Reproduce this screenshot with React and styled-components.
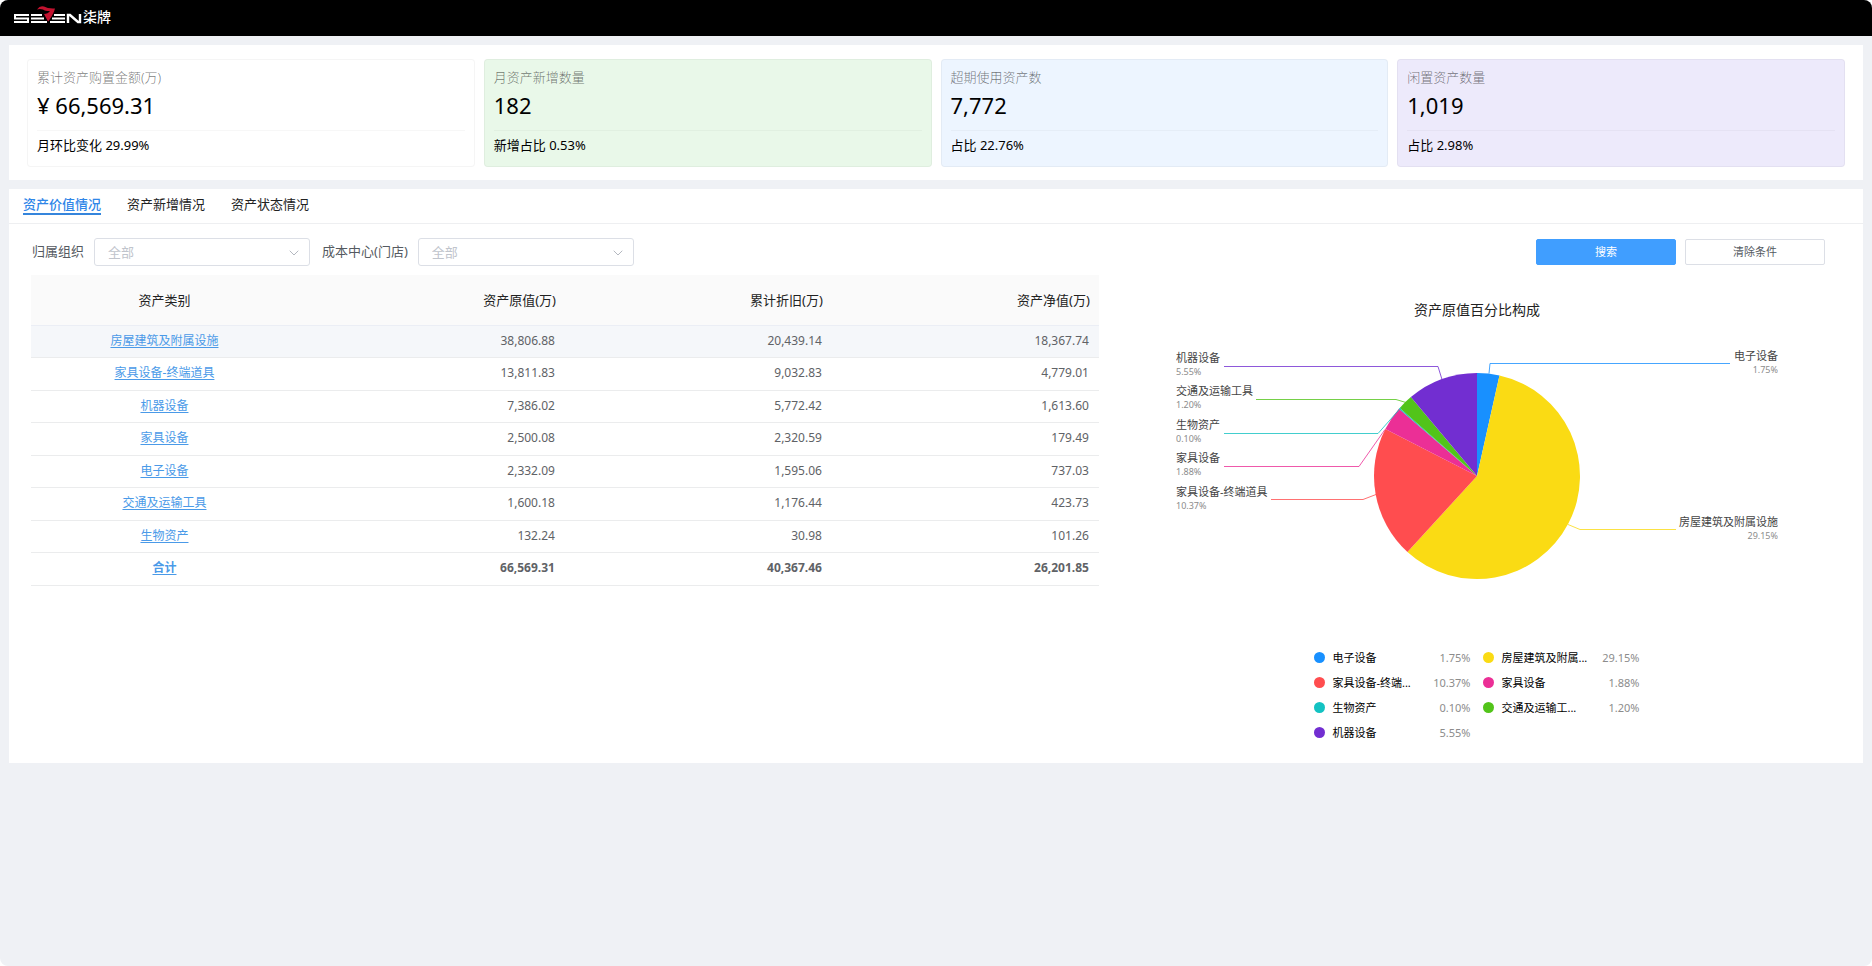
import React from "react";
import styled, { createGlobalStyle } from "styled-components";
import { ChevronDown } from "lucide-react";

const GlobalStyle = createGlobalStyle`
  *, *::before, *::after { box-sizing: border-box; }
  html { background: #fff; }
  body {
    margin: 0;
    font-family: "Noto Sans", "Noto Sans CJK SC", sans-serif;
    font-size: 13px;
    color: #000;
  }
  button, select { font-family: inherit; }
`;

const Page = styled.div`
  min-height: 100vh;
  background: #eff1f5;
  border-radius: 8px;
  overflow: hidden;
`;

const Header = styled.header`
  height: 36px;
  padding: 0 14px;
  background: #000;
  display: flex;
  align-items: flex-start;
`;

const Main = styled.main`
  padding: 9px;
  display: grid;
  gap: 9px;
`;

const Panel = styled.section`
  background: #fff;
`;

const Cards = styled(Panel)`
  display: grid;
  grid-template-columns: repeat(4, 1fr);
  gap: 9px;
  padding: 14px 18px 13px;
`;

const Card = styled.article`
  height: 108px;
  padding: 7px 9px;
  border: 1px solid rgba(0, 0, 0, 0.04);
  border-radius: 4px;
  background: ${(p) => p.$tone};
`;

const CardTitle = styled.h2`
  margin: 0;
  font-size: 13px;
  font-weight: 300;
  line-height: 20px;
  color: rgba(0, 0, 0, 0.55);
`;

const CardValue = styled.div`
  height: 44px;
  font-size: 22px;
  line-height: 36px;
  border-bottom: 1px solid rgba(0, 0, 0, 0.03);
`;

const CardNote = styled.div`
  padding-top: 4px;
  line-height: 20px;
`;

const Tabs = styled.nav`
  display: flex;
  gap: 26px;
  height: 35px;
  padding: 6px 14px 0;
  border-bottom: 1px solid #eeeff1;
`;

const Tab = styled.button`
  height: 20px;
  padding: 0;
  border: 0;
  border-bottom: 2px solid ${(p) => (p.$active ? "#3585dc" : "transparent")};
  background: none;
  font-size: 13px;
  line-height: 18px;
  font-weight: ${(p) => (p.$active ? 500 : 400)};
  color: ${(p) => (p.$active ? "#2f86e8" : "#222")};
`;

const Filters = styled.form`
  display: flex;
  align-items: center;
  justify-content: space-between;
  height: 28px;
  margin: 14px 38px 9px 23px;
`;

const FieldGroup = styled.div`
  display: flex;
  gap: 12px;
`;

const Field = styled.label`
  display: flex;
  align-items: center;
  gap: 10px;
  color: #555a61;
`;

const FieldName = styled.span`
  line-height: 18px;
  padding-bottom: 2px;
`;

const SelectBox = styled.span`
  position: relative;
  display: block;

  svg {
    position: absolute;
    right: 8px;
    top: 7px;
    pointer-events: none;
    color: #b4b8c0;
  }
`;

const Select = styled.select`
  display: block;
  width: 216px;
  height: 28px;
  padding: 0 30px 0 13px;
  border: 1px solid #dcdfe6;
  border-radius: 3px;
  background: #fff;
  appearance: none;
  font-size: 13px;
  color: #c0c4cc;
`;

const Actions = styled.div`
  display: flex;
  gap: 9px;
`;

const Button = styled.button`
  width: 140px;
  height: 26px;
  padding: 0;
  border: 1px solid ${(p) => (p.$primary ? "#409eff" : "#dcdfe6")};
  border-radius: 2px;
  background: ${(p) => (p.$primary ? "#409eff" : "#fff")};
  color: ${(p) => (p.$primary ? "#fff" : "#555a61")};
  font-size: 11px;
  line-height: 16px;
`;

const Content = styled.div`
  display: grid;
  grid-template-columns: 59fr 41fr;
  align-items: start;
  padding: 0 22px 21px;
`;

const Table = styled.table`
  width: 100%;
  border-collapse: separate;
  border-spacing: 0;
  table-layout: fixed;
`;

const HeadCell = styled.th`
  height: 51px;
  padding: 0 9px 2px;
  border-bottom: 1px solid #ebeef5;
  background: #fafafa;
  font-size: 13px;
  font-weight: 400;
  text-align: ${(p) => (p.$first ? "center" : "right")};
  color: #222;
`;

const Row = styled.tr`
  height: 32px;
  font-weight: ${(p) => (p.$total ? 700 : 400)};
  background: ${(p) => (p.$hover ? "#f5f7fa" : "#fff")};

  &:nth-child(even) { height: 33px; }
`;

const Cell = styled.td`
  padding: 0 10px 2px;
  border-bottom: 1px solid #ebeced;
  font-size: 12px;
  line-height: 20px;
  text-align: ${(p) => (p.$first ? "center" : "right")};
  color: #606266;
`;

const CellLink = styled.a`
  color: #4a9ae8;
  text-decoration: underline;
  text-underline-offset: 2px;
`;

const ChartSection = styled.section`
  display: flex;
  flex-direction: column;
  align-items: center;
  padding: 25px 0 0 14px;
`;

const ChartTitle = styled.h2`
  margin: 0;
  font-size: 14px;
  font-weight: 400;
  line-height: 20px;
  color: #222;
`;

const PieSvg = styled.svg`
  display: block;
  margin-top: 20px;

  .name { font-size: 11px; fill: #444; }
  .pct { font-size: 9px; fill: #8c8c8c; }
`;

const Legend = styled.ul`
  display: grid;
  grid-template-columns: 156px 156px;
  gap: 5px 13px;
  margin: 0;
  padding: 47px 0 0;
  list-style: none;
`;

const LegendItem = styled.li`
  display: flex;
  align-items: center;
  height: 20px;
  gap: 7px;
  font-size: 11px;
`;

const Dot = styled.span`
  width: 11px;
  height: 11px;
  border-radius: 50%;
  background: ${(p) => p.$color};
`;

const LegendValue = styled.span`
  margin-left: auto;
  color: #8c8c8c;
`;

const cards = [
  { title: "累计资产购置金额(万)", value: "¥ 66,569.31", note: "月环比变化 29.99%", tone: "#fff" },
  { title: "月资产新增数量", value: "182", note: "新增占比 0.53%", tone: "#e9f8e9" },
  { title: "超期使用资产数", value: "7,772", note: "占比 22.76%", tone: "#edf5ff" },
  { title: "闲置资产数量", value: "1,019", note: "占比 2.98%", tone: "#edeafb" },
];

const columns = ["资产类别", "资产原值(万)", "累计折旧(万)", "资产净值(万)"];

const rows = [
  ["房屋建筑及附属设施", "38,806.88", "20,439.14", "18,367.74"],
  ["家具设备-终端道具", "13,811.83", "9,032.83", "4,779.01"],
  ["机器设备", "7,386.02", "5,772.42", "1,613.60"],
  ["家具设备", "2,500.08", "2,320.59", "179.49"],
  ["电子设备", "2,332.09", "1,595.06", "737.03"],
  ["交通及运输工具", "1,600.18", "1,176.44", "423.73"],
  ["生物资产", "132.24", "30.98", "101.26"],
  ["合计", "66,569.31", "40,367.46", "26,201.85"],
];

const slices = [
  { name: "电子设备", value: 1.75, color: "#1890ff", line: "313,33 314,23 554,23", right: true, y: 20 },
  { name: "房屋建筑及附属设施", short: "房屋建筑及附属...", value: 29.15, color: "#fadb14", line: "392,184 404,189 500,189", right: true, y: 186 },
  { name: "家具设备-终端道具", short: "家具设备-终端...", value: 10.37, color: "#ff4d4f", line: "200,154 187,159 95,159", y: 156 },
  { name: "家具设备", value: 1.88, color: "#eb2f96", line: "209,89 183,126 48,126", y: 122 },
  { name: "生物资产", value: 0.1, color: "#13c2c2", line: "225,67 202,93 48,93", y: 89 },
  { name: "交通及运输工具", short: "交通及运输工...", value: 1.2, color: "#52c41a", line: "230,62 220,59 80,59", y: 55 },
  { name: "机器设备", value: 5.55, color: "#722ed1", line: "266,39 262,26 48,26", y: 22 },
];

const percent = (value) => `${value.toFixed(2)}%`;

const CENTER = { x: 301, y: 136 };
const RADIUS = 103;

function arcPath(from, to) {
  const point = (t) => {
    const a = t * 2 * Math.PI;
    return `${CENTER.x + RADIUS * Math.sin(a)} ${CENTER.y - RADIUS * Math.cos(a)}`;
  };
  const large = to - from > 0.5 ? 1 : 0;
  return `M${CENTER.x} ${CENTER.y}L${point(from)}A${RADIUS} ${RADIUS} 0 ${large} 1 ${point(to)}Z`;
}

function PieChart() {
  const total = slices.reduce((sum, s) => sum + s.value, 0);
  let start = 0;
  const arcs = slices.map((s) => {
    const from = start;
    start += s.value / total;
    return { ...s, d: arcPath(from, start) };
  });
  return (
    <PieSvg width="602" height="260" viewBox="0 0 602 260" role="img" aria-label="资产原值百分比构成">
      {arcs.map((s) => (
        <path key={s.name} d={s.d} fill={s.color} />
      ))}
      {slices.map((s) => (
        <g key={s.name} textAnchor={s.right ? "end" : "start"}>
          <polyline points={s.line} transform="translate(0 0.5)" fill="none" stroke={s.color} strokeOpacity="0.8" />
          <text className="name" x={s.right ? 602 : 0} y={s.y}>{s.name}</text>
          <text className="pct" x={s.right ? 602 : 0} y={s.y + 13}>{percent(s.value)}</text>
        </g>
      ))}
    </PieSvg>
  );
}

function Logo() {
  return (
    <svg width="100" height="28" viewBox="0 0 100 28" role="img" aria-label="SEVEN 柒牌">
      <g fill="none" stroke="#fff" strokeWidth="2">
        <path d="M15 15H1V18.5H14V22H0" />
        <path d="M17 15H28M17 18.5H30M17 22H33" />
        <path d="M40 15H51M38 18.5H51M36 22H51" />
        <path d="M54 23V15H56L64 22H66V14" strokeWidth="2.4" />
      </g>
      <path d="M23 9.5Q26 5 30 6.5Q34 9 41 8.5Q40 13 35 20.5L34 21.5L30 14Q34 14 36 11Q31 11 29 9.5Q26 8.500 23 9.500Z" fill="#c2122f" />
      <text x="69" y="22" fontSize="14" fontWeight="500" fill="#fff">柒牌</text>
    </svg>
  );
}

function FilterSelect({ label }) {
  return (
    <Field>
      <FieldName>{label}</FieldName>
      <SelectBox>
        <Select defaultValue="all">
          <option value="all">全部</option>
        </Select>
        <ChevronDown size={16} strokeWidth={1.5} />
      </SelectBox>
    </Field>
  );
}

export default function App() {
  return (
    <>
      <GlobalStyle />
      <Page>
        <Header>
          <Logo />
        </Header>
        <Main>
          <Cards>
            {cards.map((c) => (
              <Card key={c.title} $tone={c.tone}>
                <CardTitle>{c.title}</CardTitle>
                <CardValue>{c.value}</CardValue>
                <CardNote>{c.note}</CardNote>
              </Card>
            ))}
          </Cards>
          <Panel>
            <Tabs>
              <Tab type="button" $active>资产价值情况</Tab>
              <Tab type="button">资产新增情况</Tab>
              <Tab type="button">资产状态情况</Tab>
            </Tabs>
            <Filters>
              <FieldGroup>
                <FilterSelect label="归属组织" />
                <FilterSelect label="成本中心(门店)" />
              </FieldGroup>
              <Actions>
                <Button type="button" $primary>搜索</Button>
                <Button type="button">清除条件</Button>
              </Actions>
            </Filters>
            <Content>
              <Table>
                <thead>
                  <tr>
                    {columns.map((c, i) => (
                      <HeadCell key={c} scope="col" $first={i === 0}>{c}</HeadCell>
                    ))}
                  </tr>
                </thead>
                <tbody>
                  {rows.map(([name, ...values], i) => (
                    <Row key={name} $hover={i === 0} $total={i === rows.length - 1}>
                      <Cell $first>
                        <CellLink href="#">{name}</CellLink>
                      </Cell>
                      {values.map((v) => (
                        <Cell key={v}>{v}</Cell>
                      ))}
                    </Row>
                  ))}
                </tbody>
              </Table>
              <ChartSection>
                <ChartTitle>资产原值百分比构成</ChartTitle>
                <PieChart />
                <Legend>
                  {slices.map((s) => (
                    <LegendItem key={s.name}>
                      <Dot $color={s.color} />
                      {s.short || s.name}
                      <LegendValue>{percent(s.value)}</LegendValue>
                    </LegendItem>
                  ))}
                </Legend>
              </ChartSection>
            </Content>
          </Panel>
        </Main>
      </Page>
    </>
  );
}
